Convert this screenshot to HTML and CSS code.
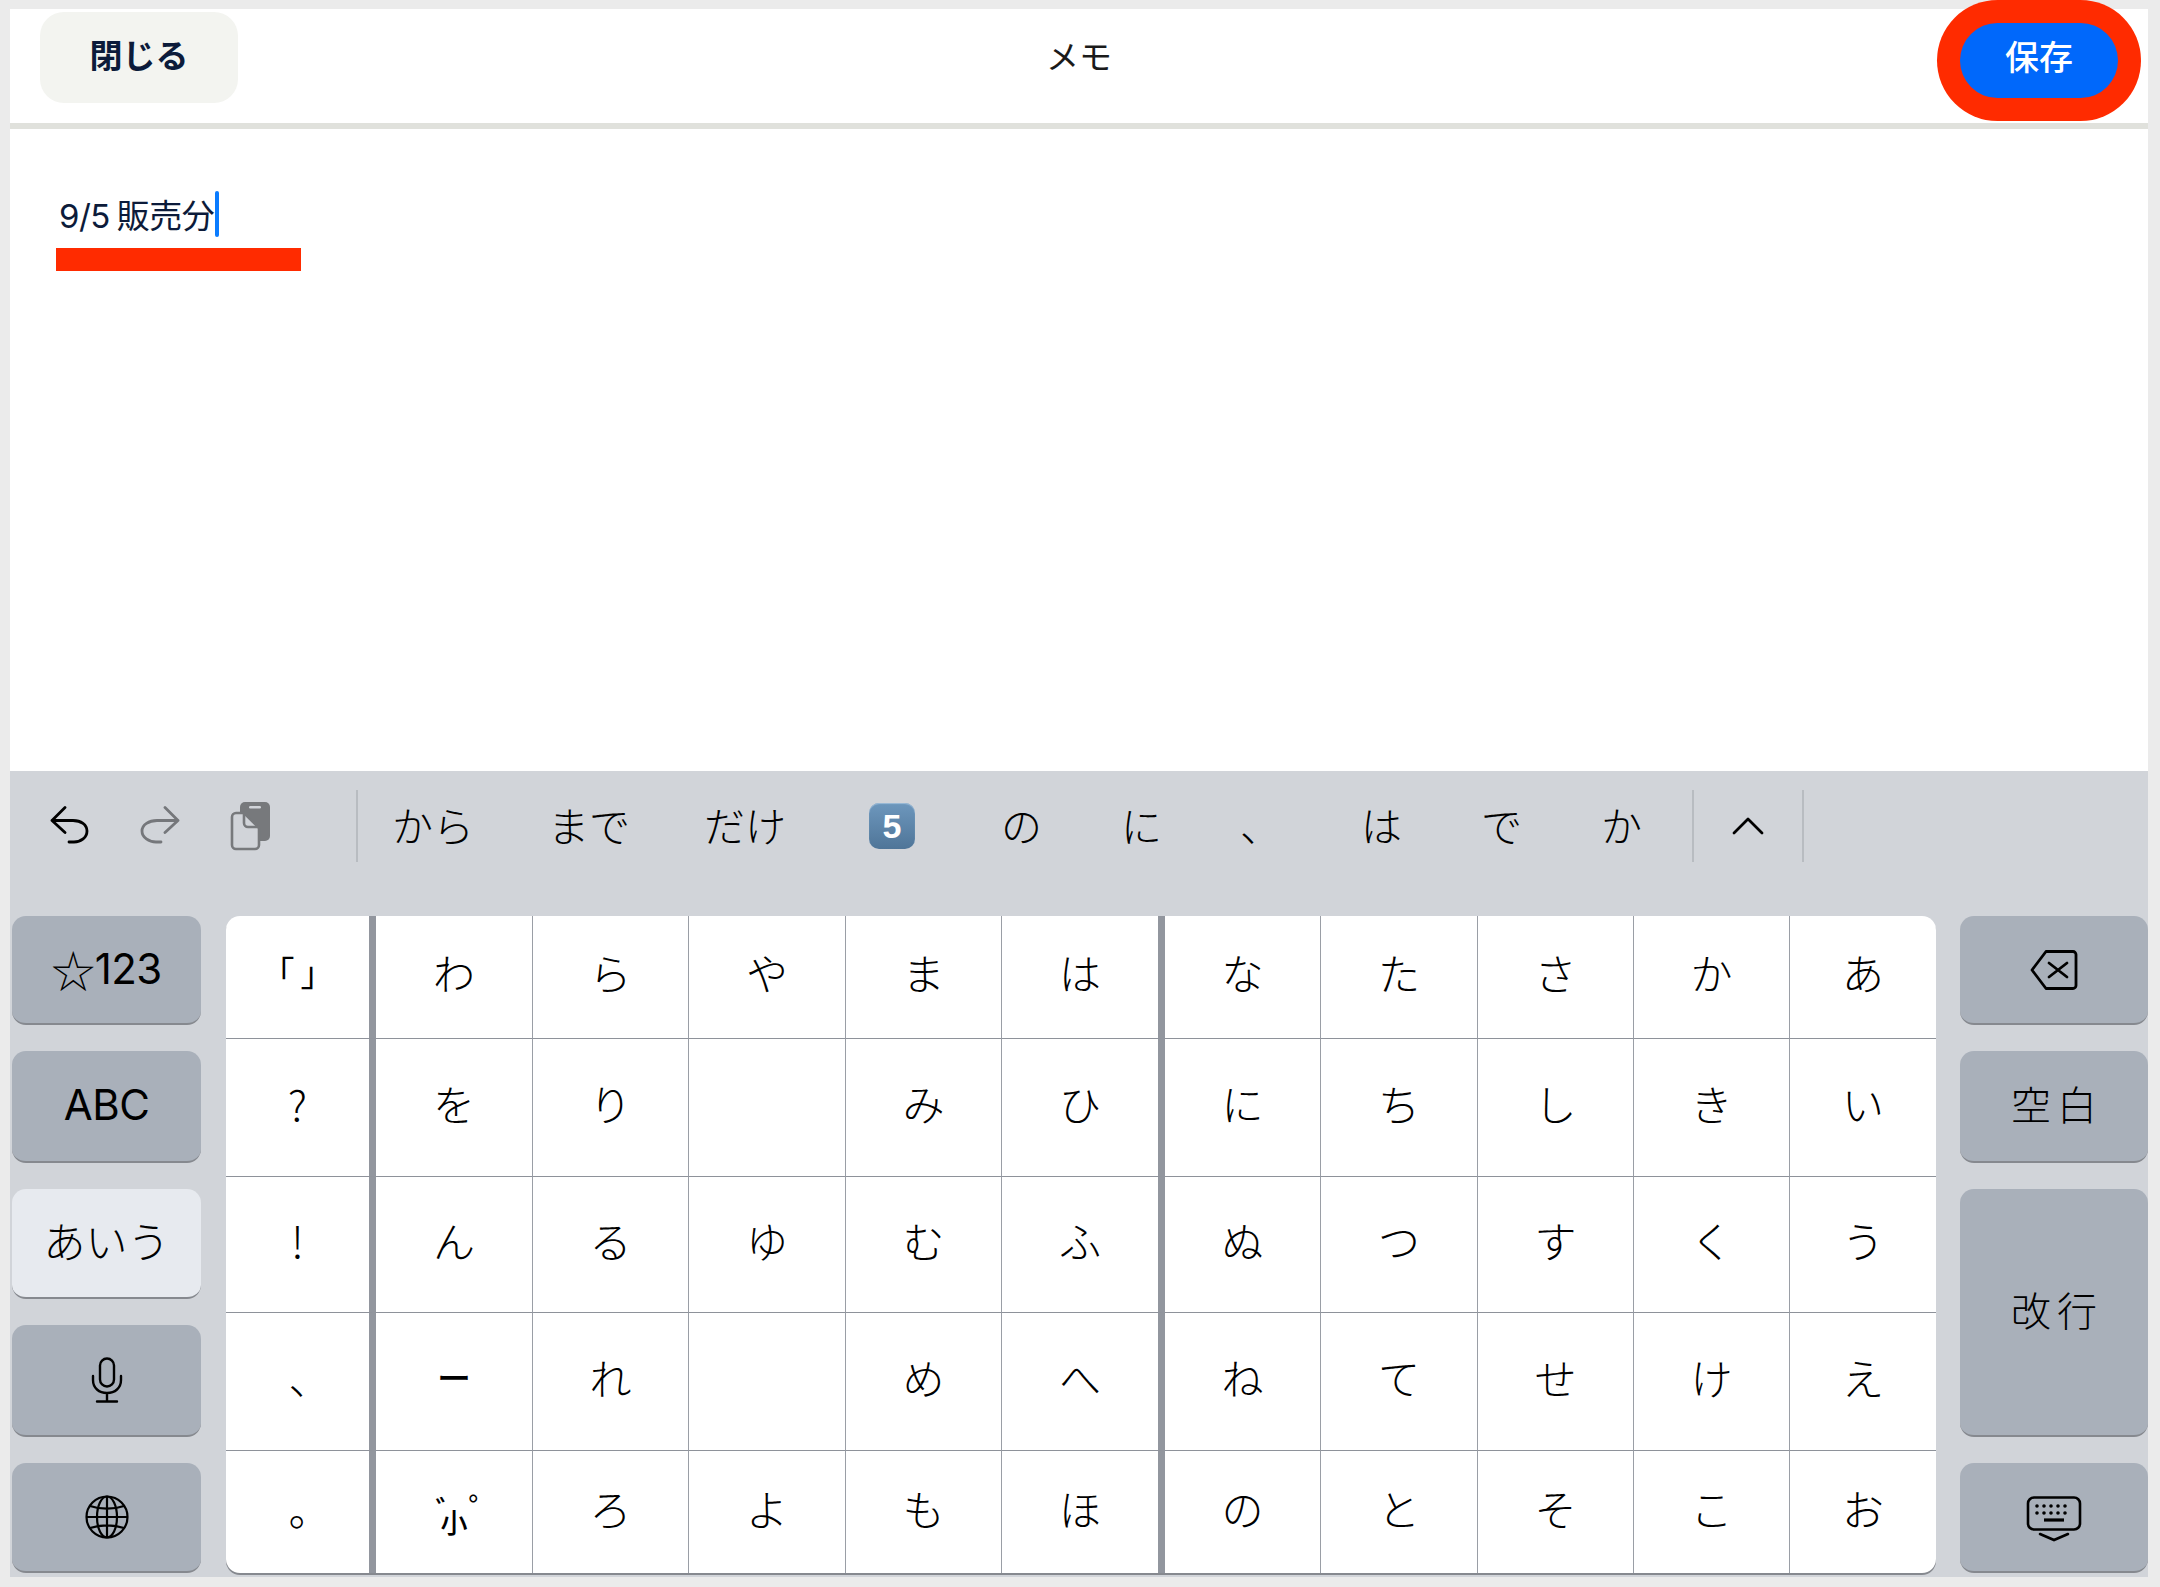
FILE: index.html
```html
<!DOCTYPE html>
<html lang="ja">
<head>
<meta charset="utf-8">
<title>メモ</title>
<link rel="stylesheet" href="styles.css">
</head>
<body>
<div class="screen">
  <header class="topbar">
    <button class="close-btn">閉じる</button>
    <div class="title">メモ</div>
    <button class="save-btn">保存</button>
  </header>
  <main class="editor">
    <div class="memo"><span class="memo-text">9/5 販売分</span><i class="caret"></i></div>
    <div class="mark"></div>
  </main>
  <section class="keyboard">
    <div class="candbar">
      <div class="tools">
        <svg class="ic-undo" width="40" height="38" viewBox="0 0 40 38" fill="none" stroke="#000" stroke-width="2.8" stroke-linecap="round" stroke-linejoin="round"><path d="M15 1.500 2 14.500l13 12M2 14.500h21c8 0 14 4 14 10.500s-6 11-13 11h-5"/></svg>
        <svg class="ic-redo" width="40" height="38" viewBox="0 0 40 38" fill="none" stroke="#75777b" stroke-width="2.8" stroke-linecap="round" stroke-linejoin="round"><path d="M25 1.500l13 13-13 12M38 14.500H17c-8 0-15 4-15 10.500s7 11 14 11h5"/></svg>
        <svg class="ic-clip" width="44" height="54" viewBox="0 0 44 54"><rect x="11" y="2" width="30" height="39" rx="5" fill="#77797c"/><rect x="20" y="6" width="12" height="2.500" rx="1.200" fill="#d1d4d9"/><path d="M7 13h8l15 15v17a4 4 0 0 1-4 4H7a4 4 0 0 1-4-4V17a4 4 0 0 1 4-4Z" fill="#d1d4d9" stroke="#77797c" stroke-width="2.600" stroke-linejoin="round"/><path d="M15 13v10a4 4 0 0 0 4 4h11" fill="none" stroke="#77797c" stroke-width="2.600"/></svg>
      </div>
      <div class="cands">
        <span>から</span><span>まで</span><span>だけ</span><span class="badge">5</span><span>の</span><span>に</span><span>、</span><span>は</span><span>で</span><span>か</span>
      </div>
      <div class="expand"><svg width="32" height="20" viewBox="0 0 32 20" fill="none" stroke="#000" stroke-width="2.800" stroke-linecap="round" stroke-linejoin="round"><path d="M2 17 16 3l14 14"/></svg></div>
    </div>
    <div class="keys">
      <div class="side side-left">
        <div class="fn num"><span class="star">☆</span>123</div>
        <div class="fn num">ABC</div>
        <div class="fn cjk active">あいう</div>
        <div class="fn"><svg width="32" height="46" viewBox="0 0 32 46" fill="none" stroke="#000" stroke-width="2.400" stroke-linecap="round"><rect x="9" y="1.500" width="14" height="28" rx="7"/><path d="M2 19v4c0 8 6 13 14 13s14-5 14-13v-4M16 36v8M6 44.500h20"/></svg></div>
        <div class="fn"><svg width="44" height="44" viewBox="0 0 44 44" fill="none" stroke="#000" stroke-width="2.200"><circle cx="22" cy="22" r="20.500"/><ellipse cx="22" cy="22" rx="10" ry="20.500"/><path d="M22 1.500v41M1.500 22h41M5 11c10 3.500 24 3.500 34 0M5 33c10-3.500 24-3.500 34 0"/></svg></div>
      </div>
      <div class="pad">
        <div class="k bracket">「」</div><div class="k">わ</div><div class="k">ら</div><div class="k">や</div><div class="k">ま</div><div class="k">は</div><div class="k">な</div><div class="k">た</div><div class="k">さ</div><div class="k">か</div><div class="k">あ</div>
        <div class="k">?</div><div class="k">を</div><div class="k">り</div><div class="k"></div><div class="k">み</div><div class="k">ひ</div><div class="k">に</div><div class="k">ち</div><div class="k">し</div><div class="k">き</div><div class="k">い</div>
        <div class="k">!</div><div class="k">ん</div><div class="k">る</div><div class="k">ゆ</div><div class="k">む</div><div class="k">ふ</div><div class="k">ぬ</div><div class="k">つ</div><div class="k">す</div><div class="k">く</div><div class="k">う</div>
        <div class="k punct-key">、</div><div class="k dash">ー</div><div class="k">れ</div><div class="k"></div><div class="k">め</div><div class="k">へ</div><div class="k">ね</div><div class="k">て</div><div class="k">せ</div><div class="k">け</div><div class="k">え</div>
        <div class="k punct-key">。</div><div class="k"><span class="small-kana">小<b class="voiced">゛</b><b class="semi">゜</b></span></div><div class="k">ろ</div><div class="k">よ</div><div class="k">も</div><div class="k">ほ</div><div class="k">の</div><div class="k">と</div><div class="k">そ</div><div class="k">こ</div><div class="k">お</div>
      </div>
      <div class="side">
        <div class="fn"><svg width="48" height="40" viewBox="0 0 48 40" fill="none" stroke="#000" stroke-width="2.800" stroke-linejoin="round" stroke-linecap="round"><path d="M16 1.500h27a3 3 0 0 1 3 3v31a3 3 0 0 1-3 3H16L2 20Z"/><path d="M19 13l18 14M37 13 19 27"/></svg></div>
        <div class="fn cjk wide">空 白</div>
        <div class="fn cjk wide tall">改 行</div>
        <div class="fn"><svg class="ic-kbd" width="56" height="46" viewBox="0 0 56 46" fill="none" stroke="#000" stroke-width="2.600" stroke-linecap="round"><rect x="2" y="1.500" width="52" height="32" rx="6"/><path d="M11 10h35M11 17h35M11 24h0M46 24h0" stroke-width="3.600" stroke-dasharray="0 7"/><path d="M18 24h20" stroke-width="3.200" stroke-linecap="butt"/><path d="M14 38l14 6 14-6"/></svg></div>
      </div>
    </div>
  </section>
</div>
</body>
</html>
```
FILE: styles.css
```css
* { box-sizing: border-box; }
html, body { margin: 0; padding: 0; }
body {
  width: 2160px;
  height: 1587px;
  background: #ebebeb;
  padding: 9px 12px 10px 10px;
  font-family: Inter, "Noto Sans CJK JP", sans-serif;
  color: #0c1b3a;
  overflow: hidden;
}
.screen { height: 1568px; display: flex; flex-direction: column; background: #fff; }

/* header */
.topbar {
  height: 120px;
  flex: none;
  display: grid;
  grid-template-columns: 1fr auto 1fr;
  align-items: start;
  border-bottom: 6px solid #e0e1dc;
  padding: 3px 30px 0 30px;
}
.close-btn {
  width: 198px;
  height: 91px;
  padding: 0 0 8px;
  border: 0;
  border-radius: 24px;
  background: #f3f4f0;
  color: #0c1b3a;
  font: 700 33px "Noto Sans CJK JP", sans-serif;
}
.title { font: 400 33px/86px "Noto Sans CJK JP", sans-serif; color: #1a1a1a; }
.save-btn {
  justify-self: end;
  width: 158px;
  height: 75px;
  margin-top: 11px;
  padding: 0 0 10px;
  border: 0;
  border-radius: 38px;
  background: #0068fb;
  color: #fff;
  font: 500 34px "Noto Sans CJK JP", sans-serif;
  box-shadow: 0 0 0 23px #ff2b00;
}

/* editor */
.editor { flex: 1; padding: 62px 0 0 46px; }
.memo { display: flex; align-items: center; height: 46px; padding-left: 3px; }
.memo-text { font-size: 33px; font-weight: 400; line-height: 46px; padding-top: 3px; letter-spacing: -0.5px; word-spacing: -2px; }
.caret { width: 4px; height: 46px; margin-left: 1px; background: #0a7cff; border-radius: 2px; }
.mark { width: 245px; height: 23px; margin-top: 11px; background: #ff2b00; }

/* keyboard */
.keyboard { flex: none; height: 806px; background: #d1d4d9; color: #000; font-family: "Noto Sans CJK JP", sans-serif; font-weight: 300; padding: 0 0 4px 2px; display: flex; flex-direction: column; }
.candbar { height: 145px; flex: none; display: flex; align-items: flex-start; padding-top: 19px; margin-left: -2px; }
.tools { width: 348px; height: 72px; border-right: 2px solid #b8bcc1; display: flex; padding-left: 40px; }
.ic-undo { margin-top: 16px; }
.ic-redo { margin: 16px 0 0 50px; }
.ic-clip { margin: 10px 0 0 49px; }
.cands {
  width: 1334px;
  height: 72px;
  padding-left: 34px;
  display: grid;
  grid-template-columns: 156px 156px 165px 132px 120px 119px 121px 120px 120px 90px;
  font-size: 41px;
  line-height: 68px;
  white-space: nowrap;
}
.badge {
  align-self: center;
  width: 46px;
  height: 46px;
  border-radius: 10px;
  background: linear-gradient(#6d97bd, #4f7598);
  box-shadow: inset 0 1px 1px #9dbcd8;
  color: #fff;
  font: 700 34px/46px "Liberation Sans", sans-serif;
  text-align: center;
}
.expand { width: 112px; height: 72px; border-left: 2px solid #b8bcc1; border-right: 2px solid #b8bcc1; display: flex; align-items: center; justify-content: center; }

.keys { flex: 1; display: flex; }
.side { width: 188px; flex: none; display: grid; grid-template-rows: 109px 112px 110px 112px 110px; row-gap: 26px; }
.side-left { width: 189px; }
.fn {
  background: #a9b0ba;
  border-bottom: 2px solid #86898f;
  border-radius: 14px;
  display: flex;
  align-items: center;
  justify-content: center;
  font-size: 42px;
  line-height: 1;
}
.num { font-family: Inter, sans-serif; font-weight: 400; font-size: 42px; padding-bottom: 2px; letter-spacing: -0.5px; }
.star { font-family: "Noto Sans CJK JP", sans-serif; font-weight: 300; font-size: 44px; }
.cjk { padding-bottom: 6px; }
.active { background: #e7eaef; }
.wide { font-size: 40px; word-spacing: -3px; }
.tall { grid-row: span 2; }
.ic-kbd { margin-top: 4px; }

.pad {
  width: 1710px;
  margin: 0 24px 0 25px;
  background: #fff;
  border-radius: 14px;
  overflow: hidden;
  display: grid;
  grid-template-columns: 150px 157px 156px 157px 156px 163px 156px 157px 156px 156px 146px;
  grid-template-rows: 123px 138px 136px 138px 122px;
  box-shadow: 0 2px 0 #86898f;
}
.k {
  border-right: 1px solid #9a9ea6;
  border-bottom: 1px solid #8e929a;
  padding-bottom: 10px;
  display: flex;
  align-items: center;
  justify-content: center;
  font-size: 42px;
  font-weight: 300;
}
.k:nth-child(-n + 11) { padding-bottom: 12px; }
.k:nth-child(11n + 1), .k:nth-child(11n + 6) { border-right: 7px solid #92969e; }
.k:nth-child(11n) { border-right: 0; }
.k:nth-last-child(-n + 11) { border-bottom: 0; }
.punct-key { padding-left: 24px; }
.bracket { font-size: 34px; letter-spacing: 6px; font-weight: 400; padding-left: 6px; }
.dash { font-size: 34px; font-weight: 500; }
.small-kana { position: relative; font-size: 27px; font-weight: 500; line-height: 1; margin-top: 28px; }
.voiced, .semi { position: absolute; font-weight: 500; font-size: 30px; line-height: 1; top: -14px; }
.voiced { left: -5px; }
.semi { left: 28px; font-size: 34px; font-weight: 400; top: -16px; }
```
